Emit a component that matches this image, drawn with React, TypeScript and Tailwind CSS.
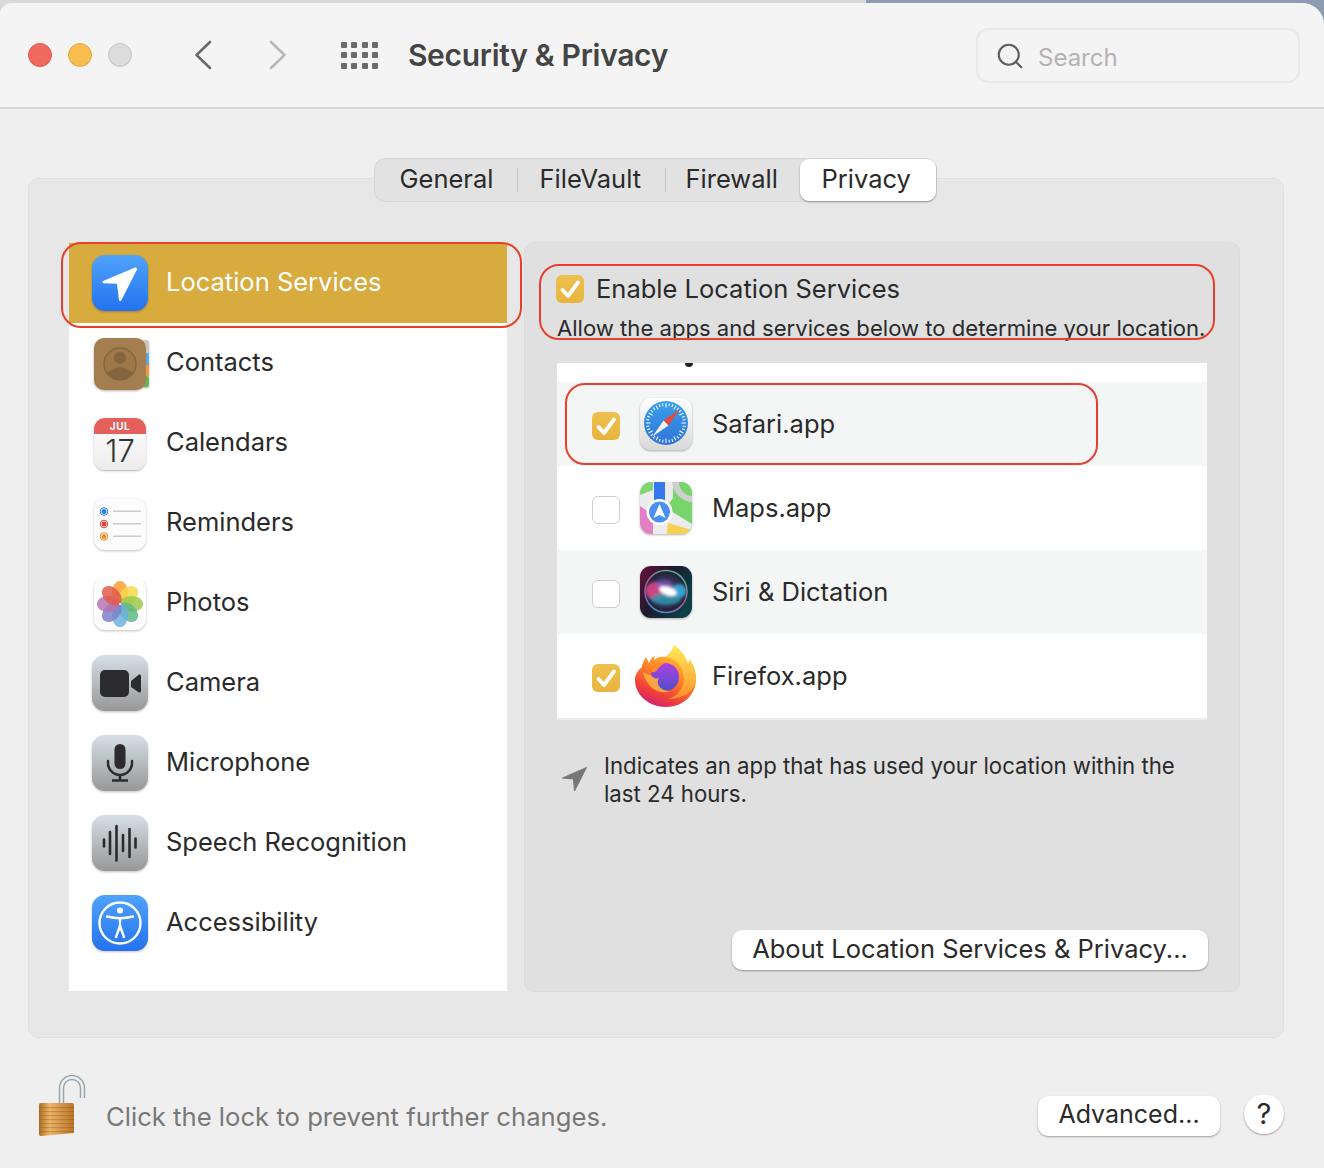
import React from 'react';
import { Search } from 'lucide-react';

const Squircle: React.FC<{ from: string; to: string; children: React.ReactNode }> = ({ from, to, children }) => {
  const id = `sq${from.slice(1)}${to.slice(1)}`;
  return (
    <svg width="56" height="56" viewBox="0 0 56 56" className="block drop-shadow-[0_1px_1px_rgba(0,0,0,0.25)]">
      <defs>
        <linearGradient id={id} x1="0" y1="0" x2="0" y2="1">
          <stop offset="0" stopColor={from} />
          <stop offset="1" stopColor={to} />
        </linearGradient>
      </defs>
      <rect x="0" y="0" width="56" height="56" rx="13" fill={`url(#${id})`} />
      {children}
    </svg>
  );
};

const LocationIcon = () => (
  <Squircle from="#4fa3fb" to="#2472ef">
    <path d="M43 12.500 L11 26 Q9.500 27.500 11.500 28.200 L25 28.800 L27 45.500 Q28.500 47 29.500 45 L45 14.500 Q45 12 43 12.500 Z" fill="#fff" />
  </Squircle>
);

const ContactsIcon = () => (
  <svg width="56" height="56" viewBox="0 0 56 56" className="block mt-[2px] overflow-visible drop-shadow-[0_1px_1px_rgba(0,0,0,0.3)]">
    <rect x="46" y="3" width="11" height="14" rx="3" fill="#c9c6c0" />
    <rect x="48" y="16" width="9" height="12" fill="#5da9e2" />
    <rect x="48" y="28" width="9" height="11" fill="#ee9a3a" />
    <rect x="48" y="39" width="9" height="11" rx="2" fill="#68b45a" />
    <rect x="2" y="1" width="52" height="52" rx="10" fill="#a47e4e" />
    <circle cx="28" cy="27" r="16" fill="#9c784a" stroke="#85653d" strokeWidth="1.500" />
    <circle cx="28" cy="21" r="6" fill="#85653d" />
    <path d="M15 36 Q28 24 41 36 Q35 43 28 43 Q21 43 15 36 Z" fill="#85653d" />
  </svg>
);

const CalendarIcon = () => (
  <div className="w-[52px] h-[52px] mx-[2px] mt-[3px] rounded-[11px] overflow-hidden flex flex-col bg-gradient-to-b from-white to-[#ececec] shadow-[0_1px_2px_rgba(0,0,0,0.3)]">
    <div className="h-[16px] bg-[#e5605a] text-white text-[10px] font-bold leading-[16px] text-center tracking-[0.5px]">JUL</div>
    <div className="text-[#333] text-[31px] font-light leading-[34px] text-center">17</div>
  </div>
);

const RemindersIcon = () => (
  <svg width="56" height="56" viewBox="0 0 56 56" className="block mt-[2px] drop-shadow-[0_1px_1px_rgba(0,0,0,0.25)]">
    <rect x="2" y="1" width="52" height="52" rx="11" fill="#fcfcfc" />
    {[
      [14.500, '#2f7ee8'],
      [27, '#e0443e'],
      [39.500, '#ea8d2c'],
    ].map(([y, c]) => (
      <g key={y as number}>
        <circle cx="12" cy={y as number} r="3.800" fill="#fff" stroke={c as string} strokeWidth="1" />
        <circle cx="12" cy={y as number} r="2.500" fill={c as string} />
        <rect x="21" y={(y as number) - 1} width="28" height="1.500" fill="#c9c9cf" />
      </g>
    ))}
  </svg>
);

const PhotosIcon = () => {
  const colors = ['#f5a033', '#f6d94a', '#9cc94a', '#5fb88a', '#6db2e2', '#7b82c8', '#b574b4', '#e25a4a'];
  return (
    <svg width="56" height="56" viewBox="0 0 56 56" className="block mt-[2px] drop-shadow-[0_1px_1px_rgba(0,0,0,0.25)]">
      <rect x="2" y="1" width="52" height="52" rx="11" fill="#fdfdfd" />
      {colors.map((c, i) => (
        <ellipse key={c} cx="28" cy="15.500" rx="8" ry="11.500" fill={c} fillOpacity="0.85" transform={`rotate(${i * 45} 28 27)`} />
      ))}
      <circle cx="28" cy="27" r="1" fill="#fff" />
    </svg>
  );
};

const GRAY_FROM = '#d5e0e6';
const GRAY_TO = '#979797';

const CameraIcon = () => (
  <Squircle from={GRAY_FROM} to={GRAY_TO}>
    <rect x="8" y="15" width="29" height="27" rx="5" fill="#2b2b2d" />
    <path d="M39 26 L47 19.500 Q49 19 49 21 L49 36 Q49 38 47 37.500 L39 32 Z" fill="#2b2b2d" />
  </Squircle>
);

const MicIcon = () => (
  <Squircle from={GRAY_FROM} to={GRAY_TO}>
    <rect x="22.500" y="9" width="11" height="25" rx="5.500" fill="#2b2b2d" />
    <path d="M16 26 V28 A12 12 0 0 0 40 28 V26" fill="none" stroke="#2b2b2d" strokeWidth="2.500" strokeLinecap="round" />
    <path d="M28 40 V45 M20 45.500 H36" stroke="#2b2b2d" strokeWidth="2.600" />
  </Squircle>
);

const SpeechIcon = () => (
  <Squircle from={GRAY_FROM} to={GRAY_TO}>
    <g stroke="#2b2b2d" strokeWidth="2.600" strokeLinecap="round">
      <path d="M12 24.500 V31.500 M18 17 V39 M24.500 11 V45.500 M31 20 V36 M37.500 14 V42 M43.500 23.500 V32.500" />
    </g>
  </Squircle>
);

const AccessibilityIcon = () => (
  <Squircle from="#4fa3fb" to="#2472ef">
    <circle cx="28" cy="28" r="20.500" fill="none" stroke="#fff" strokeWidth="2.400" />
    <circle cx="28" cy="15.500" r="3" fill="#fff" />
    <path d="M15 21.500 Q28 25 41 21.500 M28 24 V31 M28 31 L24 42 M28 31 L32 42" fill="none" stroke="#fff" strokeWidth="2.400" strokeLinecap="round" strokeLinejoin="round" />
  </Squircle>
);

const SafariIcon = () => (
  <svg width="54" height="54" viewBox="0 0 54 54" className="block drop-shadow-[0_1px_1px_rgba(0,0,0,0.3)]">
    <defs>
      <linearGradient id="safBg" x1="0" y1="0" x2="0" y2="1">
        <stop offset="0" stopColor="#ffffff" />
        <stop offset="1" stopColor="#d9d9d9" />
      </linearGradient>
      <linearGradient id="safDial" x1="0" y1="0" x2="0" y2="1">
        <stop offset="0" stopColor="#3aa0ee" />
        <stop offset="1" stopColor="#2f74d8" />
      </linearGradient>
    </defs>
    <g transform="translate(1 1)">
      <rect x="0" y="0" width="52" height="52" rx="11" fill="url(#safBg)" />
      <circle cx="26" cy="25" r="22" fill="url(#safDial)" />
      {Array.from({ length: 36 }).map((_, i) => (
        <rect key={i} x="25.500" y="5" width="1" height={i % 3 === 0 ? 4.500 : 3} fill="#fff" transform={`rotate(${i * 10} 26 25)`} />
      ))}
      <path d="M39.500 11.500 L23.500 22.500 L28.500 27.500 Z" fill="#e8483e" />
      <path d="M12.500 38.500 L28.500 27.500 L23.500 22.500 Z" fill="#f4f4f4" />
    </g>
  </svg>
);

const MapsIcon = () => (
  <svg width="54" height="54" viewBox="0 0 54 54" className="block drop-shadow-[0_1px_1px_rgba(0,0,0,0.3)]">
    <defs>
      <clipPath id="mapClip">
        <rect x="0" y="0" width="52" height="52" rx="11" />
      </clipPath>
    </defs>
    <g transform="translate(1 1)" clipPath="url(#mapClip)">
      <rect width="52" height="52" fill="#ecebee" />
      <path d="M0 0 H13 V8 L0 13 Z" fill="#7fd672" />
      <path d="M33 0 H52 V42 L26 26 L33 16 Z" fill="#78d56c" />
      <path d="M32 0 A22 22 0 0 0 52 20 V14 A14 14 0 0 1 39 0 Z" fill="#cfcfcf" />
      <path d="M0 24 L13 33 V52 H0 Z" fill="#e37fc5" />
      <path d="M27 52 L28 41 L52 48 V52 Z" fill="#f6d04e" />
      <rect x="14" y="0" width="11" height="30" fill="#3478f0" />
      <circle cx="19.500" cy="30" r="13" fill="#fff" />
      <circle cx="19.500" cy="30" r="10.500" fill="#4a90f2" />
      <path d="M19.500 22 L25.500 36 L19.500 33 L13.500 36 Z" fill="#fff" />
    </g>
  </svg>
);

const SiriIcon = () => (
  <svg width="54" height="54" viewBox="0 0 54 54" className="block drop-shadow-[0_1px_1px_rgba(0,0,0,0.3)]">
    <defs>
      <linearGradient id="siriBg" x1="0" y1="0" x2="1" y2="0.600">
        <stop offset="0" stopColor="#66123c" />
        <stop offset="0.500" stopColor="#1b1b2e" />
        <stop offset="1" stopColor="#0c3f46" />
      </linearGradient>
      <linearGradient id="siriRing" x1="0.800" y1="0" x2="0.200" y2="1">
        <stop offset="0" stopColor="#46c08c" />
        <stop offset="0.500" stopColor="#b0568a" />
        <stop offset="1" stopColor="#3f8fd0" />
      </linearGradient>
      <radialGradient id="siriInner" cx="0.500" cy="0.500" r="0.500">
        <stop offset="0" stopColor="#5a4a7a" />
        <stop offset="1" stopColor="#1c2036" />
      </radialGradient>
      <filter id="siriBlur" x="-30%" y="-30%" width="160%" height="160%">
        <feGaussianBlur stdDeviation="1.600" />
      </filter>
      <clipPath id="siriClip">
        <circle cx="27" cy="26.500" r="20.500" />
      </clipPath>
    </defs>
    <rect x="1" y="1" width="52" height="52" rx="11" fill="url(#siriBg)" />
    <circle cx="27" cy="26.500" r="21" fill="url(#siriInner)" stroke="url(#siriRing)" strokeWidth="1.500" />
    <g clipPath="url(#siriClip)">
      <g filter="url(#siriBlur)">
        <ellipse cx="16" cy="26" rx="10" ry="9" fill="#e8478a" fillOpacity="0.85" />
        <ellipse cx="40" cy="26" rx="7.500" ry="7" fill="#35a8d8" fillOpacity="0.95" />
        <ellipse cx="27" cy="34" rx="15" ry="6" fill="#2d9cb4" fillOpacity="0.8" />
        <ellipse cx="25" cy="20" rx="9" ry="5" fill="#8a5ad0" fillOpacity="0.6" />
        <ellipse cx="29" cy="26" rx="9" ry="4.500" fill="#ffffff" transform="rotate(18 29 26)" />
      </g>
    </g>
  </svg>
);

const FirefoxIcon = () => (
  <svg width="62" height="62" viewBox="0 0 62 62" className="block">
    <defs>
      <linearGradient id="ffOuter" x1="0.800" y1="0.100" x2="0.400" y2="1">
        <stop offset="0" stopColor="#ffc83a" />
        <stop offset="0.500" stopColor="#ff7e27" />
        <stop offset="0.820" stopColor="#ef3d3a" />
        <stop offset="1" stopColor="#d6246e" />
      </linearGradient>
      <linearGradient id="ffTop" x1="0.500" y1="0" x2="0.500" y2="1">
        <stop offset="0" stopColor="#fff05c" />
        <stop offset="1" stopColor="#ff9a2a" />
      </linearGradient>
      <linearGradient id="ffGlobe" x1="0.500" y1="0" x2="0.500" y2="1">
        <stop offset="0" stopColor="#b040e0" />
        <stop offset="1" stopColor="#4f4fcb" />
      </linearGradient>
    </defs>
    <path d="M39 0 C37 7 34 9 31 12 C26 11 22 12 19 15 L20 11 C17 12 15 15 14 18 L11 12 C8 17 7 20 7 22 C3 25 0 30 0 35 C0 50 14 62 31 62 C48 62 61 50 61 34 C61 26 58 18 54 14 C54 16 54 17 53 19 C50 9 44 4 39 0 Z" fill="url(#ffOuter)" />
    <path d="M39 0 C37 7 34 9 31 12 C42 14 49 23 49 34 C49 44 41 52 33 54 C48 54 61 46 61 33 C61 26 58 18 54 14 C54 16 54 17 53 19 C50 9 44 4 39 0 Z" fill="url(#ffTop)" fillOpacity="0.85" />
    <circle cx="30" cy="32" r="14" fill="url(#ffGlobe)" />
    <path d="M16 30 C18 33 21 34 24 33 C20 39 26 46 35 46 C25 50 12 44 8 27 C11 29 13 30 16 30 Z" fill="#ffb13c" fillOpacity="0.9" />
    <path d="M17 25 C20 19 26 17 30 18 C26 20 24 22 22 25 C20 28 16 28 17 25 Z" fill="#ff8a2a" />
  </svg>
);

const LockIcon = () => (
  <svg width="50" height="64" viewBox="0 0 50 64" className="block">
    <defs>
      <linearGradient id="lockBody" x1="0" y1="0" x2="1" y2="0">
        <stop offset="0" stopColor="#a96c22" />
        <stop offset="0.300" stopColor="#eeb56a" />
        <stop offset="1" stopColor="#b87526" />
      </linearGradient>
    </defs>
    <path d="M24.500 30 V13 A10.500 10.500 0 0 1 45.500 13 V23" fill="none" stroke="#98a4ab" strokeWidth="5.500" />
    <path d="M24.500 30 V13 A10.500 10.500 0 0 1 45.500 13 V23" fill="none" stroke="#eef1f2" strokeWidth="2.500" />
    <path d="M2 30 Q2 28 4 28 H35 Q37 28 37 30 V58 L4 61 Q2 61 2 59 Z" fill="url(#lockBody)" />
    {[32, 36, 40, 44, 48, 52, 56].map((y) => (
      <rect key={y} x="2" y={y} width="35" height="1.200" fill="#8f5a1c" fillOpacity="0.4" />
    ))}
  </svg>
);

const Checkbox: React.FC<{ on?: boolean; className?: string }> = ({ on, className = '' }) =>
  on ? (
    <div className={`w-[28px] h-[28px] rounded-[6px] bg-gradient-to-b from-[#efc04e] to-[#e8b43e] shrink-0 ${className}`}>
      <svg width="28" height="28" viewBox="0 0 28 28" className="block">
        <path d="M6.500 15 L12 21 L22 7.500" fill="none" stroke="#fff" strokeWidth="3.800" strokeLinecap="round" strokeLinejoin="round" />
      </svg>
    </div>
  ) : (
    <div className={`w-[28px] h-[28px] rounded-[6px] bg-white border border-[#cfcfcf] shrink-0 ${className}`} />
  );

const services = [
  { name: 'Location Services', icon: <LocationIcon />, active: true },
  { name: 'Contacts', icon: <ContactsIcon /> },
  { name: 'Calendars', icon: <CalendarIcon /> },
  { name: 'Reminders', icon: <RemindersIcon /> },
  { name: 'Photos', icon: <PhotosIcon /> },
  { name: 'Camera', icon: <CameraIcon /> },
  { name: 'Microphone', icon: <MicIcon /> },
  { name: 'Speech Recognition', icon: <SpeechIcon /> },
  { name: 'Accessibility', icon: <AccessibilityIcon /> },
];

const apps = [
  { name: 'Safari.app', icon: <SafariIcon />, on: true, shade: true },
  { name: 'Maps.app', icon: <MapsIcon /> },
  { name: 'Siri & Dictation', icon: <SiriIcon />, shade: true },
  { name: 'Firefox.app', icon: <FirefoxIcon />, on: true },
];

const App: React.FC = () => {
  return (
    <div className="relative w-[1324px] h-[1168px] overflow-hidden bg-[#8c9db3] font-['Inter',sans-serif] text-[#2a2a2a]">
      <div className="absolute left-0 top-0 w-[866px] h-[22px] bg-[#d9d9d9]" />

      <div className="relative mt-[3px] h-[1165px] rounded-tl-[12px] rounded-tr-[22px] overflow-hidden bg-[#efefef] flex flex-col">
        {/* title bar */}
        <div className="h-[106px] shrink-0 bg-[#f4f4f4] border-b-2 border-[#d6d6d6] flex items-center pl-[28px] pr-[24px]">
          <div className="w-[24px] h-[24px] rounded-full bg-[#f0695f] border border-[#dc5a50]" />
          <div className="w-[24px] h-[24px] rounded-full bg-[#f7be4f] border border-[#e3a83c] ml-[16px]" />
          <div className="w-[24px] h-[24px] rounded-full bg-[#dcdcdc] border border-[#c6c6c6] ml-[16px]" />
          <svg width="18" height="30" viewBox="0 0 18 30" className="ml-[62px]">
            <path d="M16 2 L2.500 15 L16 28" fill="none" stroke="#6a6a6a" strokeWidth="2.600" strokeLinecap="round" strokeLinejoin="round" />
          </svg>
          <svg width="18" height="30" viewBox="0 0 18 30" className="ml-[57px]">
            <path d="M2 2 L15.500 15 L2 28" fill="none" stroke="#b8b8b8" strokeWidth="2.600" strokeLinecap="round" strokeLinejoin="round" />
          </svg>
          <div className="grid grid-cols-4 gap-x-[4.300px] gap-y-[4.500px] ml-[54px]">
            {Array.from({ length: 12 }).map((_, i) => (
              <div key={i} className="w-[6px] h-[6px] rounded-[1px] bg-[#6b6b6b]" />
            ))}
          </div>
          <h1 className="ml-[30px] text-[30px] font-semibold text-[#444] tracking-[-0.3px]">Security &amp; Privacy</h1>
          <div className="ml-auto mt-[1px] w-[324px] h-[55px] rounded-[12px] border-2 border-[#e8e8e8] flex items-center pl-[17px]">
            <Search className="w-[30px] h-[30px] text-[#5f5f5f]" strokeWidth={1.700} />
            <span className="ml-[13px] mt-[4px] text-[24px] text-[#b3b3b3]">Search</span>
          </div>
        </div>

        {/* content panel */}
        <div className="ml-[28px] mr-[40px] mt-[69px] h-[860px] rounded-[10px] bg-[#e7e7e7] border border-[#e0e0e0] flex flex-col items-center">
          <div className="-mt-[21px] mr-[2px] flex items-center h-[44px] w-[563px] rounded-[11px] bg-[#e2e2e2] border border-[#d6d6d6] text-[25.500px] text-[#2a2a2a]">
            <span className="pl-[25px] w-[142px] pb-[2px]">General</span>
            <div className="w-px h-[24px] bg-[#c6c6c6]" />
            <span className="pl-[22px] w-[147px] pb-[2px]">FileVault</span>
            <div className="w-px h-[24px] bg-[#c6c6c6]" />
            <span className="pl-[20px] w-[134px] pb-[2px]">Firewall</span>
            <span className="h-[42px] flex-1 bg-white rounded-[9px] shadow-[0_1px_2px_rgba(0,0,0,0.35)] flex items-center pl-[22px] pb-[2px]">Privacy</span>
          </div>

          <div className="mt-[41px] w-full flex pl-[40px]">
            <div className="w-[438px] h-[748px] bg-white">
              {services.map((s) => (
                <div key={s.name} className={`h-[80px] flex items-center pl-[23px] ${s.active ? 'bg-[#d8ab3f] text-white' : ''}`}>
                  <div className="w-[56px] h-[56px] shrink-0">{s.icon}</div>
                  <span className="ml-[18px] mb-[1px] text-[25.500px]">{s.name}</span>
                </div>
              ))}
            </div>

            <div className="ml-[17px] -mt-px w-[716px] h-[750px] rounded-[10px] bg-[#e0e0e0] border border-[#dbdbdb] flex flex-col pl-[32px] pr-[32px]">
              <div className="mt-[27px] -ml-px flex items-center gap-[12px]">
                <Checkbox on />
                <span className="text-[25.500px]">Enable Location Services</span>
              </div>
              <p className="mt-[6px] text-[22.100px] leading-[28px] whitespace-nowrap">Allow the apps and services below to determine your location.</p>

              <div className="relative mt-[21px] h-[357px] bg-white border-b-2 border-[#ececec]">
                <div className="absolute left-[128px] top-0 w-[8px] h-[4px] bg-[#222] rounded-b-full" />
                <div className="h-[19px]" />
                {apps.map((a) => (
                  <div key={a.name} className={`h-[84px] flex items-center pl-[35px] ${a.shade ? 'bg-[#f4f5f5]' : ''}`}>
                    <Checkbox on={a.on} className="mt-[4px]" />
                    <div className="w-[62px] h-[62px] ml-[15px] flex items-center justify-center">{a.icon}</div>
                    <span className="ml-[15px] text-[25.500px]">{a.name}</span>
                  </div>
                ))}
              </div>

              <div className="mt-[32px] flex items-start">
                <svg width="25" height="25" viewBox="0 0 25 25" className="ml-[5px] mt-[15px] shrink-0">
                  <path d="M24.500 0.500 L0.500 11 L11.500 12 L12.500 24 Z" fill="#777" stroke="#777" strokeLinejoin="round" />
                </svg>
                <p className="ml-[17px] text-[22.200px] leading-[28px]">Indicates an app that has used your location within the<br />last 24 hours.</p>
              </div>

              <div className="mt-auto mb-[21px] -mr-px flex justify-end">
                <button className="w-[476px] h-[40px] rounded-[10px] bg-white shadow-[0_1px_2px_rgba(0,0,0,0.35)] text-[25.500px] pb-[3px]">About Location Services &amp; Privacy...</button>
              </div>
            </div>
          </div>
        </div>

        {/* footer */}
        <div className="flex-1 relative flex items-start pl-[37px] pr-[40px]">
          <div className="mt-[37px]"><LockIcon /></div>
          <span className="ml-[19px] mt-[60px] text-[25.660px] text-[#787878]">Click the lock to prevent further changes.</span>
          <button className="ml-auto mt-[58px] w-[182px] h-[40px] rounded-[10px] bg-white shadow-[0_1px_2px_rgba(0,0,0,0.35)] text-[25px] pb-[2px]">Advanced...</button>
          <button className="ml-[24px] mt-[56px] w-[40px] h-[40px] rounded-full bg-white shadow-[0_1px_2px_rgba(0,0,0,0.35)] text-[29px] leading-[40px]">?</button>
        </div>
      </div>

      {/* red annotations */}
      <div className="absolute left-[61px] top-[242px] w-[461px] h-[86px] rounded-[20px] border-2 border-[#e8402c]" />
      <div className="absolute left-[539px] top-[264px] w-[676px] h-[76px] rounded-[20px] border-2 border-[#e8402c]" />
      <div className="absolute left-[565px] top-[383px] w-[533px] h-[82px] rounded-[20px] border-2 border-[#e8402c]" />
    </div>
  );
};

export default App;
